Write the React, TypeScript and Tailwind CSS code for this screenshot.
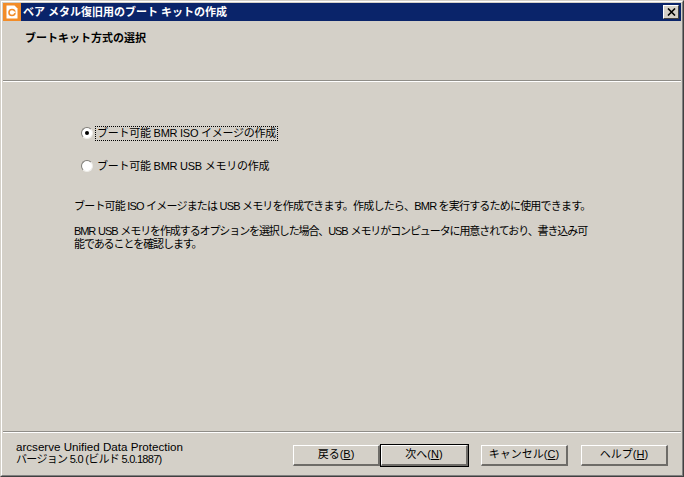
import React from "react";

const font = "font-['Liberation_Sans','Noto_Sans_CJK_JP',sans-serif]";

const WizardButton = ({ label, hotkey, primary }: { label: string; hotkey: string; primary?: boolean }) => {
  return (
    <button
      className={`h-[21px] w-[87px] bg-[#d4d0c8] text-[11px] leading-none text-black flex items-center justify-center border-t border-l border-t-white border-l-white border-b-2 border-r-2 border-b-[#6e6c68] border-r-[#6e6c68] ${
        primary ? "outline outline-1 outline-black" : ""
      }`}
    >
      {label}(<span className="underline">{hotkey}</span>)
    </button>
  );
};

const Radio = ({ checked }: { checked?: boolean }) => {
  return (
    <span className="w-[12px] h-[12px] rounded-full bg-white border border-t-[#7f7d78] border-l-[#7f7d78] border-r-[#eeece8] border-b-[#eeece8] flex items-center justify-center shrink-0">
      {checked && <span className="w-[4px] h-[4px] rounded-full bg-black" />}
    </span>
  );
};

export default function App() {
  return (
    <div className="w-[684px] h-[477px] border border-t-[#d4d0c8] border-l-[#d4d0c8] border-r-[#404040] border-b-[#404040]">
      <div className={`${font} h-full bg-[#d4d0c8] flex flex-col overflow-hidden border border-t-white border-l-white border-r-[#808080] border-b-[#808080] p-px text-black`}>
        <div className="h-[18px] shrink-0 bg-[#0a246a] flex items-center pr-[2px]">
          <div className="w-[18px] h-[18px] bg-[#f28c28] flex items-center justify-center shrink-0">
            <svg width="12" height="14" viewBox="0 0 12 14">
              <path d="M0.5 0.5 H8.5 L11.5 3.5 V13.5 H0.5 Z" fill="#fff" />
              <circle cx="6" cy="7.5" r="3" fill="none" stroke="#f28c28" strokeWidth="1.6" />
              <rect x="6" y="6.5" width="3.5" height="1.6" fill="#fff" />
            </svg>
          </div>
          <span className="ml-[2px] text-[11px] font-bold text-white whitespace-nowrap leading-none">ベア メタル復旧用のブート キットの作成</span>
          <div className="ml-auto w-[16px] h-[14px] bg-[#d4d0c8] border-t border-l border-t-white border-l-white border-b border-r border-b-[#404040] border-r-[#404040] flex items-center justify-center">
            <svg width="9" height="8" viewBox="0 0 9 8">
              <path d="M1 0.5 L8 7.5 M8 0.5 L1 7.5" stroke="#000" strokeWidth="1.6" />
            </svg>
          </div>
        </div>

        <div className="h-[59px] shrink-0 pl-[22px] pt-[10px] text-[11px] font-bold leading-[14px]">ブートキット方式の選択</div>
        <div className="shrink-0 h-[2px] bg-[#8f8d88] border-b border-b-white" />

        <div className="flex-1 pl-[71px] pr-[90px] pt-[43px] text-[11px] leading-[13px]">
          <div className="flex flex-col gap-[17px] pl-[7px]">
            <label className="flex items-center h-[16px]">
              <Radio checked />
              <span className="ml-[3px] px-[1px] outline-1 outline-dotted outline-black whitespace-nowrap tracking-[-0.25px]">ブート可能 BMR ISO イメージの作成</span>
            </label>
            <label className="flex items-center h-[16px]">
              <Radio />
              <span className="ml-[3px] px-[1px] whitespace-nowrap tracking-[-0.25px]">ブート可能 BMR USB メモリの作成</span>
            </label>
          </div>
          <p className="mt-[26px] whitespace-nowrap tracking-[-0.8px]">ブート可能 ISO イメージまたは USB メモリを作成できます。作成したら、BMR を実行するために使用できます。</p>
          <p className="mt-[12px] whitespace-nowrap tracking-[-1.1px] [word-spacing:1px]">
            BMR USB メモリを作成するオプションを選択した場合、USB メモリがコンピュータに用意されており、書き込み可
            <br />
            能であることを確認します。
          </p>
        </div>

        <div className="shrink-0 h-[2px] bg-[#8f8d88] border-b border-b-white" />
        <div className="h-[41px] shrink-0 flex items-center pl-[13px] pr-[13px]">
          <div className="text-[11px] leading-[12px] whitespace-nowrap -mt-[2px]">
            <div className="text-[11.6px]">arcserve Unified Data Protection</div>
            <div className="tracking-[-0.7px]">バージョン 5.0 (ビルド 5.0.1887)</div>
          </div>
          <div className="ml-auto flex pt-[3px]">
            <WizardButton label="戻る" hotkey="B" />
            <div className="ml-[1px]"><WizardButton label="次へ" hotkey="N" primary /></div>
            <div className="ml-[13px]"><WizardButton label="キャンセル" hotkey="C" /></div>
            <div className="ml-[13px]"><WizardButton label="ヘルプ" hotkey="H" /></div>
          </div>
        </div>
      </div>
    </div>
  );
}
